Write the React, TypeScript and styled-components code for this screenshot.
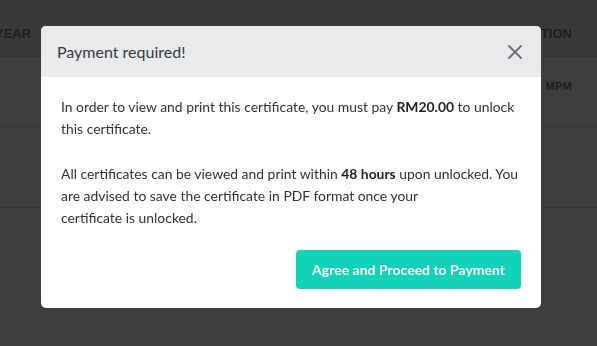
import React from "react";
import styled, { createGlobalStyle } from "styled-components";

const GlobalStyle = createGlobalStyle`
  html, body {
    margin: 0;
    padding: 0;
    background: #f4f4f4;
  }
  body {
    font-family: Lato, "Noto Sans", sans-serif;
  }
`;

const Page = styled.div`
  width: 597px;
  height: 346px;
  overflow: hidden;
  background: #f4f4f4;
  display: flex;
  flex-direction: column;
`;

const TopBar = styled.div`
  height: 11px;
  background: #e2e2e2;
`;

const Table = styled.div`
  display: flex;
  flex-direction: column;
  margin-left: -5px;
`;

const Row = styled.div<{ $head?: boolean; $h: number }>`
  height: ${(p) => p.$h}px;
  box-sizing: border-box;
  display: flex;
  align-items: ${(p) => (p.$head ? "center" : "flex-start")};
  justify-content: space-between;
  padding: ${(p) => (p.$head ? "0 25px 0 0" : "23px 25px 0 0")};
  background: ${(p) => (p.$head ? "#e8e8e8" : "#f6f6f6")};
  border-bottom: 1px solid #dcdcdc;
`;

const Cell = styled.span<{ $head?: boolean }>`
  font-family: "Liberation Sans", Arial, sans-serif;
  font-weight: 700;
  font-size: ${(p) => (p.$head ? 13 : 11)}px;
  color: #7a7a7a;
  letter-spacing: ${(p) => (p.$head ? 0 : 0.3)}px;
`;

const Backdrop = styled.div`
  position: fixed;
  inset: 0;
  background: rgba(0, 0, 0, 0.75);
  display: flex;
  align-items: flex-start;
  padding: 26px 0 0 41px;
`;

const Modal = styled.div`
  width: 500px;
  background: #ffffff;
  border-radius: 5px;
  overflow: hidden;
  display: flex;
  flex-direction: column;
`;

const Header = styled.div`
  height: 51px;
  background: #e9eaec;
  display: flex;
  align-items: center;
  justify-content: space-between;
  padding: 0 16px;
  box-sizing: border-box;
`;

const Title = styled.h5`
  margin: 0;
  font-size: 16px;
  font-weight: 400;
  color: #343a40;
`;

const CloseButton = styled.button`
  width: 20px;
  height: 20px;
  padding: 0;
  border: 0;
  background: transparent;
  display: flex;
  align-items: center;
  justify-content: center;
  cursor: pointer;
`;

const Body = styled.div`
  padding: 19px 20px 19px 20px;
  display: flex;
  flex-direction: column;
`;

const Text = styled.p`
  margin: 0 0 23px;
  font-size: 13.9px;
  line-height: 22px;
  color: #2f3338;
  &:last-of-type {
    margin-bottom: 0;
  }
  b {
    font-weight: 700;
    color: #202428;
  }
`;

const Actions = styled.div`
  display: flex;
  justify-content: flex-end;
  margin-top: 21px;
`;

const PayButton = styled.button`
  height: 39px;
  padding: 0 16px;
  border: 0;
  border-radius: 4px;
  background: #12d3b9;
  color: #ffffff;
  font-family: Lato, "Noto Sans", sans-serif;
  font-size: 14px;
  font-weight: 700;
  cursor: pointer;
`;

export default function App() {
  return (
    <>
      <GlobalStyle />
      <Page>
        <TopBar />
        <Table>
          <Row $head $h={46}>
            <Cell $head>YEAR</Cell>
            <Cell $head>ACTION</Cell>
          </Row>
          <Row $h={70}>
            <Cell />
            <Cell>CERT MPM</Cell>
          </Row>
          <Row $h={81}>
            <Cell />
            <Cell />
          </Row>
        </Table>
      </Page>
      <Backdrop>
        <Modal>
          <Header>
            <Title>Payment required!</Title>
            <CloseButton aria-label="Close">
              <svg width="16" height="16" viewBox="0 0 16 16">
                <path d="M2 2 L14 14 M14 2 L2 14" stroke="#6c7075" strokeWidth="1.8" strokeLinecap="round" />
              </svg>
            </CloseButton>
          </Header>
          <Body>
            <Text>
              In order to view and print this certificate, you must pay <b>RM20.00</b> to unlock this certificate.
            </Text>
            <Text>
              All certificates can be viewed and print within <b>48 hours</b> upon unlocked. You are advised to save
              the certificate in PDF format once your
              <br />
              certificate is unlocked.
            </Text>
            <Actions>
              <PayButton>Agree and Proceed to Payment</PayButton>
            </Actions>
          </Body>
        </Modal>
      </Backdrop>
    </>
  );
}
